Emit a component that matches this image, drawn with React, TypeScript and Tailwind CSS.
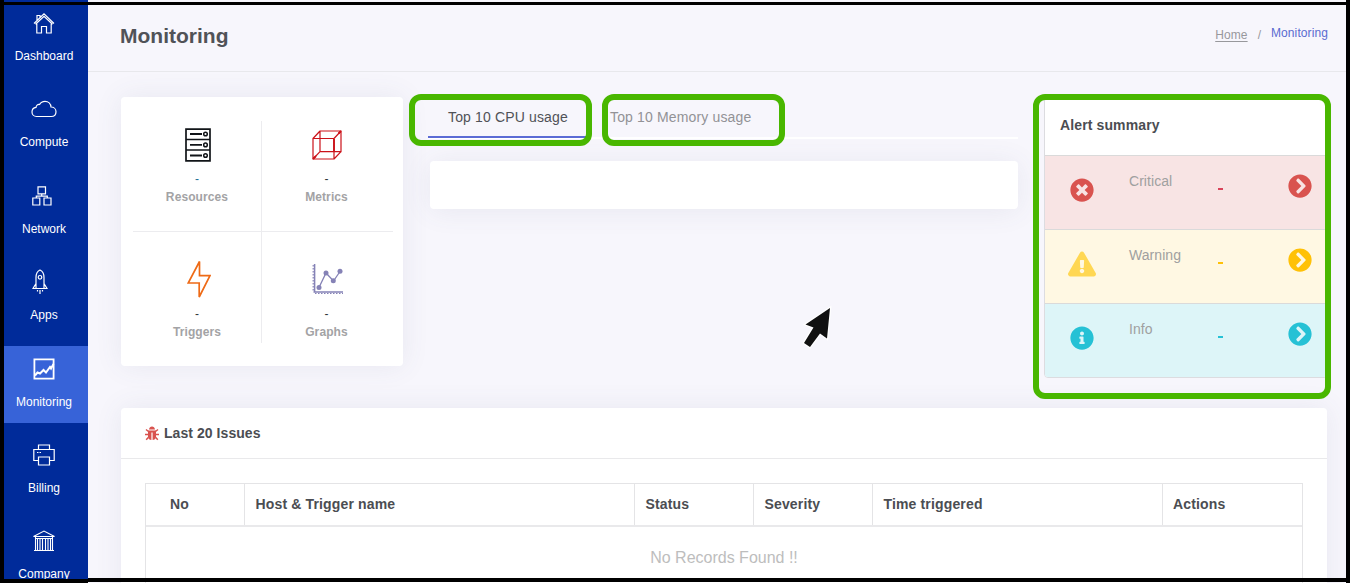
import type { ReactNode } from "react";
import { FaTimesCircle, FaExclamationTriangle, FaInfoCircle, FaChevronCircleRight } from "react-icons/fa";

const HomeIcon = () => (
  <svg width="22" height="22" viewBox="0 0 22 22" fill="none" stroke="currentColor" strokeWidth="1.2">
    <path d="M1 11.5 11 1.8l10 9.7M2.5 12.2 11 4.2l8.500 8M3.800 11v10h4.700v-6.500h5V21h4.700V11M4 8.300V3.500h3v2" />
  </svg>
);
const CloudIcon = () => (
  <svg width="26" height="18" viewBox="0 0 26 18" fill="none" stroke="currentColor" strokeWidth="1.2">
    <path d="M5.500 16.500C2.800 16.500 1 14.500 1 12c0-2.500 1.700-4.300 4-4.600.2-2 1.500-3.200 3.600-2.900C9.700 2.300 11.700 1.300 14 1.300c3.300 0 5.800 2.300 6 5.700 2.800 0 5 2 5 4.700 0 2.800-2 4.800-4.800 4.800z" />
  </svg>
);
const NetworkIcon = () => (
  <svg width="20" height="20" viewBox="0 0 20 20" fill="none" stroke="currentColor" strokeWidth="1.2">
    <path d="M6 .8h7.500v7H6zM.8 12h7v7h-7zM12 12h7v7h-7zM9.700 8v2.200M4.300 12v-1.800h11V12" />
  </svg>
);
const RocketIcon = () => (
  <svg width="16" height="26" viewBox="0 0 16 26" fill="none" stroke="currentColor" strokeWidth="1.200">
    <path d="M4 19.500V8.500C4 5 5.800 2 8 1c2.200 1 4 4 4 7.500v11zM4 14.500 1 19.500h14l-3-5M5.500 21v1.500M8 21v4M10.500 21v1.500" />
    <circle cx="8" cy="8.300" r="1.800" />
  </svg>
);
const ChartIcon = () => (
  <svg width="22" height="22" viewBox="0 0 22 22" fill="none" stroke="currentColor">
    <path strokeWidth="1.800" d="M1.400 1.400h19.200v19.200H1.400z" />
    <path strokeWidth="2" d="m2 17.500 2.500-3L7 15.500l3.500-3.500 2.500 2.500L17 9l1 1.500L20.500 6" />
  </svg>
);
const PrinterIcon = () => (
  <svg width="22" height="22" viewBox="0 0 22 22" fill="none" stroke="currentColor" strokeWidth="1.200">
    <path d="M5.500 5.500V1h11v4.500M5.500 16.500H.8v-11h20.400v11h-4.700M5.500 13h11v8h-11zM4 8.500h1.500M6.500 8.500H8" />
  </svg>
);
const BankIcon = () => (
  <svg width="24" height="22" viewBox="0 0 24 22" fill="none" stroke="currentColor" strokeWidth="1.100">
    <path d="M1.500 6.500 12 1l10.500 5.500zM3.500 8.500h17M2 20.500h20M3.500 7v13M5.500 8.500v12M8 8.500v12M10.500 8.500v12M13.500 8.500v12M16 8.500v12M18.500 8.500v12M20.500 7v13" />
  </svg>
);

const ServerIcon = () => (
  <svg width="26" height="34" viewBox="0 0 26 34" fill="none" stroke="#111418">
    <path strokeWidth="1.700" d="M1 1.200h24v31.600H1zM1 11.500h24M1 22h24" />
    <path strokeWidth="1.900" d="M5 6h12M5 16.900h12M5 27.500h12" />
    <circle cx="20.500" cy="6" r="1.800" strokeWidth="1.500" />
    <circle cx="20.500" cy="16.900" r="1.800" strokeWidth="1.500" />
    <circle cx="20.500" cy="27.500" r="1.800" strokeWidth="1.500" />
  </svg>
);
const CubeIcon = () => (
  <svg width="30" height="30" viewBox="0 0 30 30" fill="none" stroke="#cb1219" strokeWidth="1.200">
    <path d="M1 8.500h21v20.500H1zM8 1h21v20.700H8zM1 8.500 8 1M22 8.500 29 1M1 29l7-7.300M22 29l7-7.300" />
    <path strokeWidth="1.800" d="M1 29l3-3M26.500 3.500 29 1M22 9v12" />
  </svg>
);
const BoltIcon = () => (
  <svg width="24" height="42" viewBox="0 0 24 42" fill="none" stroke="#ee6a16" strokeWidth="1.700">
    <path d="M12.500 3.500 1.200 25h11v14L23 17.700H12.500z" />
  </svg>
);
const GraphIcon = () => (
  <svg width="32" height="32" viewBox="0 0 32 32" fill="none" stroke="#8582b6">
    <path strokeWidth="1.500" d="M2.600 1v28M1.500 29H31" />
    <path strokeWidth="1.200" strokeDasharray="1.500 1.500" d="M1.200 2v26M3 30.500h28" />
    <path strokeWidth="1.300" d="m7 24.500 7-14.500 7.500 8L28 8.500" />
    <g fill="#8582b6" stroke="none">
      <circle cx="7" cy="24.500" r="2.500" />
      <circle cx="14" cy="10" r="2.500" />
      <circle cx="21.300" cy="17.800" r="2.500" />
      <circle cx="28" cy="8.300" r="2.500" />
    </g>
  </svg>
);
const BugIcon = () => (
  <svg width="14" height="15" viewBox="0 0 14 15" fill="#d9534f" stroke="#d9534f">
    <path stroke="none" d="M4 3.500C4.200 1.500 5.500.5 7 .5s2.800 1 3 3zM3 4.500h8v6.200c0 2-1.800 3.300-3.400 3.300V6.500H6.400V14C4.800 14 3 12.700 3 10.700z" />
    <path fill="none" strokeWidth="1.500" d="M3.500 5.500 1 3.500M10.500 5.500 13 3.500M3.500 8.500H0M10.500 8.500H14M3.500 11.200 1.200 13.800M10.500 11.200l2.300 2.600" />
  </svg>
);

const nav: { label: string; icon: ReactNode; active?: boolean; shift?: string }[] = [
  { label: "Dashboard", icon: <HomeIcon /> },
  { label: "Compute", icon: <CloudIcon /> },
  { label: "Network", icon: <NetworkIcon />, shift: "pr-[5px]" },
  { label: "Apps", icon: <RocketIcon />, shift: "pr-2" },
  { label: "Monitoring", icon: <ChartIcon />, active: true },
  { label: "Billing", icon: <PrinterIcon /> },
  { label: "Company", icon: <BankIcon /> },
];

function Sidebar() {
  return (
    <nav className="flex w-[84px] shrink-0 flex-col bg-[#002b9a]">
      {nav.map((n) => (
        <div key={n.label} className="h-[86.4px] shrink-0">
          <div className={`flex h-[77px] flex-col items-center pr-1 text-white ${n.active ? "bg-[#3763d8]" : ""}`}>
            <div className={`mt-[9px] flex h-[28px] items-center justify-center ${n.shift ?? ""}`}>{n.icon}</div>
            <span className="mt-[10px] text-[12px] leading-[18px]">{n.label}</span>
          </div>
        </div>
      ))}
    </nav>
  );
}

function Tile({ icon, label, dash, className }: { icon: ReactNode; label: string; dash: string; className: string }) {
  return (
    <div className={`flex flex-col items-center border-[#ececef] ${className}`}>
      <div className="flex h-[44px] items-center">{icon}</div>
      <span className={`mt-[4px] text-[12px] leading-[16px] ${dash}`}>-</span>
      <span className="text-[12px] leading-[20px] font-bold tracking-[0.1px] text-[#a3a3a5]">{label}</span>
    </div>
  );
}

const alerts = [
  { label: "Critical", Icon: FaTimesCircle, row: "bg-[#f8e4e4]", tone: "text-[#d9534f]", left: "text-[#d9534f]", dash: "bg-[#d9435a]", size: 24 },
  { label: "Warning", Icon: FaExclamationTriangle, row: "bg-[#fff8e3]", tone: "text-[#ffc107]", left: "text-[#ffd753]", dash: "bg-[#ffc107]", size: 28 },
  { label: "Info", Icon: FaInfoCircle, row: "bg-[#ddf5f8]", tone: "text-[#26c1d5]", left: "text-[#26c1d5]", dash: "bg-[#26c1d5]", size: 24 },
];

function AlertSummary() {
  return (
    <section className="h-[281px] w-[284px] overflow-hidden rounded border border-[#dcdce0] bg-white">
      <h2 className="h-[57px] pt-[16px] pl-[15px] text-[14px] leading-[22px] font-bold tracking-[0.12px] text-[#4b4d52]">Alert summary</h2>
      {alerts.map(({ label, Icon, row, tone, left, dash, size }) => (
        <div key={label} className={`flex h-[74px] border-t border-[#dadada] ${row}`}>
          <div className={`flex h-[68px] w-[74px] items-center justify-center ${left}`}><Icon size={size} /></div>
          <span className="w-[88px] pt-[14px] pl-[10px] text-[14px] leading-[22px] tracking-[0.05px] text-[#a0a0a0]">{label}</span>
          <span className={`mt-[32px] ml-[11px] h-[2px] w-[5px] ${dash}`} />
          <div className={`mt-[18px] ml-[65px] ${tone}`}><FaChevronCircleRight size={24} /></div>
        </div>
      ))}
    </section>
  );
}

function Issues() {
  const th = "border-l border-[#e4e4e6] pl-[10.5px]";
  return (
    <section className="mt-[42px] ml-[33px] h-[200px] w-[1206px] rounded bg-white shadow-[0_0_28px_rgba(82,85,120,0.09)]">
      <h2 className="flex h-[51px] items-center gap-[5px] border-b border-[#e9e9eb] pl-6 text-[14px] font-bold tracking-[0.06px] text-[#4b4d52]">
        <BugIcon />
        <span>Last 20 Issues</span>
      </h2>
      <div className="mt-6 ml-6 h-[130px] w-[1158px] border border-[#e4e4e6]">
        <div className="grid h-[43px] grid-cols-[98px_390px_119px_119px_290px_140px] border-b-2 border-[#e9e9eb] text-[14px] leading-[41px] font-bold tracking-[0.15px] text-[#4b4d52]">
          <div className="pl-6">No</div>
          <div className={th}>Host &amp; Trigger name</div>
          <div className={th}>Status</div>
          <div className={th}>Severity</div>
          <div className={th}>Time triggered</div>
          <div className="border-l border-[#e4e4e6] pl-[10px]">Actions</div>
        </div>
        <p className="pt-[19px] text-center text-[16px] leading-6 text-[#bdbdbd]">No Records Found !!</p>
      </div>
    </section>
  );
}

export default function App() {
  return (
    <div className="relative flex h-[583px] w-[1350px] overflow-hidden border-r-4 border-l-4 border-black bg-[#f7f6fc] font-['Liberation_Sans',sans-serif]">
      <Sidebar />
      <main className="flex min-w-0 flex-1 flex-col">
        <header className="flex h-[72px] shrink-0 justify-between border-b border-[#e8e8ec] pr-[18px] pl-8">
          <h1 className="pt-[21px] text-[21px] leading-[30px] font-bold text-[#505257]">Monitoring</h1>
          <div className="flex text-[12px] leading-[18px]">
            <span className="pt-[26px] tracking-[0.1px] text-[#98989c] underline underline-offset-2">Home</span>
            <span className="pt-[26px] pl-[10px] text-[#98989c]">/</span>
            <span className="pt-6 pl-[10px] tracking-[0.1px] text-[#5a6bd0]">Monitoring</span>
          </div>
        </header>
        <div className="mt-[25px] ml-[33px] flex h-[269px] shrink-0 items-start">
          <section className="grid h-[269px] w-[282px] grid-cols-[129px_131px] grid-rows-[111px_111px] content-start rounded bg-white px-[12px] pt-[24px] shadow-[0_0_28px_rgba(82,85,120,0.09)]">
            <Tile icon={<div className="pl-[2px]"><ServerIcon /></div>} label="Resources" dash="text-[#1f6f96]" className="border-r border-b pt-[2px]" />
            <Tile icon={<CubeIcon />} label="Metrics" dash="text-[#33363c]" className="border-b pt-[2px] pr-[2px]" />
            <Tile icon={<div className="pb-[3px] pl-[4px]"><BoltIcon /></div>} label="Triggers" dash="text-[#33363c]" className="border-r pt-[26px]" />
            <Tile icon={<div className="pb-[3px] pl-[3px]"><GraphIcon /></div>} label="Graphs" dash="text-[#33363c]" className="pt-[26px] pr-[2px]" />
          </section>
          <div className="ml-[25px] w-[590px]">
            <div className="flex h-[42px] border-b-2 border-white text-[14px] leading-[40px] tracking-[0.15px]">
              <span className="h-[41px] w-[162px] border-b-2 border-[#5b6bd5] pl-5 text-[#505257]">Top 10 CPU usage</span>
              <span className="pl-[20px] text-[#929296]">Top 10 Memory usage</span>
            </div>
            <div className="mt-[22px] ml-[2px] h-[48px] w-[588px] rounded bg-white shadow-[0_2px_28px_rgba(82,85,120,0.09)]" />
          </div>
          <div className="ml-[26px]"><AlertSummary /></div>
        </div>
        <Issues />
      </main>

      <svg className="absolute top-[303px] left-[792px]" width="40" height="48" viewBox="0 0 40 48">
        <path d="M34 5 9.500 21.500l8 3L8 40l6 4 10-13.500 7 5z" fill="#111" stroke="#fff" strokeWidth="2.500" paintOrder="stroke" />
      </svg>
      <div className="absolute top-[94px] left-[405px] h-[52px] w-[183px] rounded-[12px] border-[6px] border-[#49b700]" />
      <div className="absolute top-[94px] left-[598px] h-[52px] w-[183px] rounded-[12px] border-[6px] border-[#49b700]" />
      <div className="absolute top-[94px] left-[1029px] h-[304.500px] w-[298px] rounded-[12px] border-[6px] border-[#49b700]" />
      <div className="absolute top-[2px] left-0 h-[3px] w-full bg-black" />
      <div className="absolute top-[578px] left-[84px] h-[4px] w-full bg-black" />
      <div className="absolute top-[579px] left-0 h-[4px] w-[84px] bg-black" />
    </div>
  );
}
